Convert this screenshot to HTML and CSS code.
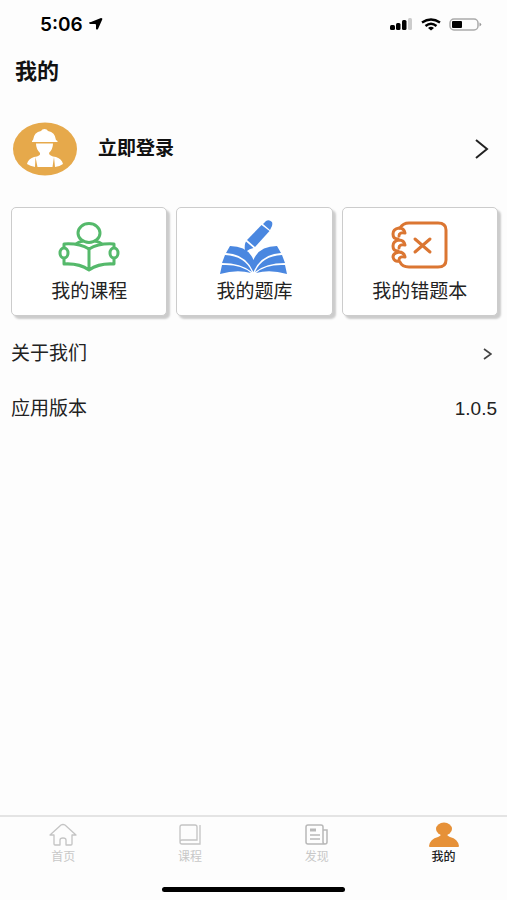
FILE: index.html
```html
<!DOCTYPE html>
<html lang="zh-CN">
<head>
    <meta charset="UTF-8">
    <meta name="viewport" content="width=device-width, initial-scale=1.0">
    <title>我的</title>
    <link rel="stylesheet" href="styles.css">
</head>
<body>
    <div class="status-bar">
        <div class="clock">
            <span>5:06</span>
            <svg width="14" height="12" viewBox="0 0 14 12"><path d="M0 5 Q0 4 2 4 L12 0 Q14 0 13 2 L9 11 Q8 12 7 11 V7 Q7 6 6 6 H1Z"/></svg>
        </div>
        <div class="indicators">
            <svg width="23" height="12" viewBox="0 0 23 12">
                <rect x="0" y="7" width="5" height="5" rx="1.5"/>
                <rect x="6" y="5" width="4.5" height="7" rx="1.5"/>
                <rect x="12" y="2" width="4.5" height="10" rx="1.5"/>
                <rect x="18" y="0" width="4" height="12" rx="1.5" fill="#ccc"/>
            </svg>
            <svg width="20" height="13" viewBox="0 0 20 13" fill="none" stroke="#000" stroke-width="2.4">
                <path d="M1 4.5 Q10 -1.5 19 4.5"/>
                <path d="M4.5 8 Q10 3.5 15.5 8"/>
                <path d="M7 10 Q10 7.5 13 10 L10 12.5Z" fill="#000" stroke="none"/>
            </svg>
            <svg width="33" height="13" viewBox="0 0 33 13">
                <rect x="1" y="1" width="28" height="11" rx="4" fill="none" stroke="#aaa" stroke-width="1.5"/>
                <rect x="3" y="3" width="10" height="7" rx="1"/>
                <path d="M30.5 4.5 Q34 6.5 30.5 8.5Z" fill="#999"/>
            </svg>
        </div>
    </div>

    <h1 class="title">我的</h1>

    <main>
        <a class="login" href="#">
            <svg width="64" height="54" viewBox="0 0 64 54">
                <ellipse cx="32" cy="27" rx="32" ry="26.5" fill="#e6a94b"/>
                <g fill="#fff">
                    <path d="M20 18 Q21 10 28 9 Q29 7 31.5 7 Q34 7 35 9 Q42 10 43 18 L44.5 19 V20 H19 V19Z"/>
                    <path d="M23 21.5 H40 Q40 27 36 31 Q36 34 43 35 Q49 37 50 42 Q46 45 42 45 L41 35 L39.5 45 H24.5 L22.5 35 L22 45 Q17 44 14 42 Q15 37 21 35 Q28 34 27 31 Q23 27 23 21.5Z"/>
                </g>
            </svg>
            <span class="login-text">立即登录</span>
            <svg width="14" height="20" viewBox="0 0 14 20" fill="none" stroke="#222" stroke-width="2"><path d="M1 1 L12 10 L1 19"/></svg>
        </a>

        <nav class="cards">
            <a class="card" href="#">
                <svg width="62" height="54" viewBox="0 0 62 54" fill="none" stroke="#55b96b" stroke-width="3" stroke-linejoin="round">
                    <ellipse cx="31" cy="13" rx="11" ry="9.5"/>
                    <path d="M18 24 Q20 22 25 21 M37 21 Q42 22 44 24"/>
                    <path d="M6 28 V24 Q21 23 31 29 Q41 23 56 24 V28"/>
                    <path d="M6 38 V44 Q21 43 31 50 Q41 43 56 44 V38 M31 29 V50"/>
                    <ellipse cx="6" cy="33" rx="4" ry="5"/>
                    <ellipse cx="56" cy="33" rx="4" ry="5"/>
                </svg>
                <span>我的课程</span>
            </a>
            <a class="card" href="#">
                <svg width="70" height="54" viewBox="0 0 70 54" fill="#4a87e0">
                    <path d="M44 4 L47 1 Q50 -1 53 2 Q54 5 52 8 L51 10Z"/>
                    <path d="M28 20 L42.5 5 L50.5 11 L36 27Z"/>
                    <path d="M27 21.5 L34.5 28 Q30 29 28 31 L24 33 L26 30 Q25 25 27 21.5Z"/>
                    <path d="M11 26 Q29 26 34.5 40 Q40 26 58 26 L62 33 Q42 34 34.5 52 Q27 34 7 33Z"/>
                    <path d="M6 35 Q26 36 33 52 Q22 43 3 43Z"/>
                    <path d="M3 45 Q22 44 32 53 Q18 49 1 54Z"/>
                    <path d="M63 35 Q43 36 36 52 Q47 43 66 43Z"/>
                    <path d="M66 45 Q47 44 37 53 Q51 49 68 54Z"/>
                </svg>
                <span>我的题库</span>
            </a>
            <a class="card" href="#">
                <svg width="58" height="54" viewBox="0 0 58 54" fill="none" stroke="#db7632" stroke-width="3" stroke-linecap="round">
                    <path d="M9 8 Q12 3 18 3 H47 Q55 3 55 10 V40 Q55 47 47 47 H18 Q11 47 9 42"/>
                    <path d="M14 13 Q13 8 8 8 Q2 9 2 14 Q2 19 7 19 M14 13 Q8 12 8 16"/>
                    <path d="M14 25 Q13 20 8 20 Q2 21 2 26 Q2 31 7 31 M14 25 Q8 24 8 28"/>
                    <path d="M14 37 Q13 32 8 32 Q2 33 2 37 Q3 42 8 41 M14 37 Q8 36 8 40"/>
                    <path d="M24 19 L39 32 M39 19 L24 32"/>
                </svg>
                <span>我的错题本</span>
            </a>
        </nav>

        <a class="row" href="#">
            <span>关于我们</span>
            <svg class="chevron" width="9" height="12" viewBox="0 0 9 12" fill="none" stroke="#444" stroke-width="1.7"><path d="M1 1 L8 6 L1 11"/></svg>
        </a>
        <div class="row">
            <span>应用版本</span>
            <span>1.0.5</span>
        </div>
    </main>

    <footer>
        <nav class="tabs">
            <a class="tab" href="#">
                <svg width="30" height="26" viewBox="0 0 30 26" fill="none" stroke="#c4c4c4" stroke-width="1.3" stroke-linejoin="round">
                    <path d="M2 13 L13 3 Q15 2 17 3 L28 13 H24 V22 Q24 23 23 23 H18 V18 Q18 16 15 16 Q12 16 12 18 V23 H7 Q6 23 6 22 V13Z"/>
                </svg>
                <span>首页</span>
            </a>
            <a class="tab" href="#">
                <svg width="30" height="26" viewBox="0 0 30 26" fill="none" stroke="#c4c4c4" stroke-width="1.3">
                    <path d="M5 20 V5 Q5 3 7 3 H20 Q22 3 22 5 V18 H7 Q5 18 5 20 Q5 22 7 22 H25 V3"/>
                </svg>
                <span>课程</span>
            </a>
            <a class="tab" href="#">
                <svg width="30" height="26" viewBox="0 0 30 26" fill="none" stroke="#b8b8b8" stroke-width="1.5">
                    <path d="M22 22 H6 Q4 22 4 20 V5 Q4 3 6 3 H19 Q21 3 21 5 V20 Q21 22 23 22 Q25 22 25 20 V8 H21"/>
                    <path d="M8 13 H18 M8 17 H18"/>
                    <path d="M8 8 H14" stroke-width="3"/>
                </svg>
                <span>发现</span>
            </a>
            <a class="tab active" href="#">
                <svg width="30" height="26" viewBox="0 0 30 26" fill="#e69138">
                    <ellipse cx="15" cy="7" rx="8" ry="6.5"/>
                    <path d="M12 12 H18 Q18 14 21 15 Q29 17 30 24 Q30 25 29 25 H1 Q0 25 0 24 Q1 17 9 15 Q12 14 12 12Z"/>
                </svg>
                <span>我的</span>
            </a>
        </nav>
        <div class="home-indicator"></div>
    </footer>
</body>
</html>
```

FILE: styles.css
```css
* {
    box-sizing: border-box;
}
body {
    font-family: "Liberation Sans", "Noto Sans CJK SC", sans-serif;
    background: #fdfdfd;
    color: #222;
    margin: 0;
    min-height: 100vh;
    display: flex;
    flex-direction: column;
}
a {
    color: inherit;
    text-decoration: none;
}
svg {
    display: block;
    flex-shrink: 0;
}
.status-bar {
    display: flex;
    align-items: center;
    justify-content: space-between;
    height: 48px;
    padding: 0 25px 0 40px;
    color: #000;
}
.clock {
    display: flex;
    align-items: center;
    gap: 6px;
    font-family: Inter, sans-serif;
    font-size: 19px;
    font-weight: 600;
}
.indicators {
    display: flex;
    align-items: center;
    gap: 8px;
}
.title {
    margin: 0;
    padding: 0 15px;
    font-size: 22px;
    line-height: 48px;
    color: #111;
}
main {
    flex: 1;
}
.login {
    display: flex;
    align-items: center;
    height: 106px;
    padding: 0 18px 0 13px;
}
.login-text {
    flex: 1;
    margin-left: 21px;
    font-size: 19px;
    line-height: 24px;
    font-weight: bold;
    color: #111;
}
.cards {
    display: grid;
    grid-template-columns: repeat(3, 1fr);
    gap: 9px;
    padding: 5px 9px 10px 11px;
}
.card {
    display: flex;
    flex-direction: column;
    align-items: center;
    justify-content: flex-end;
    gap: 6px;
    height: 109px;
    padding-bottom: 11px;
    background: #fff;
    border: 1px solid #ccc;
    border-radius: 5px;
    box-shadow: 3px 3px 2px #ccc;
    font-size: 19px;
    line-height: 24px;
}
.row {
    display: flex;
    align-items: center;
    justify-content: space-between;
    height: 55px;
    padding: 0 10px 0 11px;
    font-size: 19px;
    line-height: 24px;
}
.chevron {
    margin-right: 5px;
}
.tabs {
    display: grid;
    grid-template-columns: repeat(4, 1fr);
    border-top: 2px solid #e4e4e4;
    padding-top: 5px;
}
.tab {
    display: flex;
    flex-direction: column;
    align-items: center;
    font-size: 12px;
    line-height: 18px;
    color: #c8c8c8;
}
.tab.active {
    color: #222;
    font-weight: 500;
}
.home-indicator {
    width: 36%;
    height: 5px;
    margin: 21px auto 8px;
    background: #000;
    border-radius: 3px;
}
```
